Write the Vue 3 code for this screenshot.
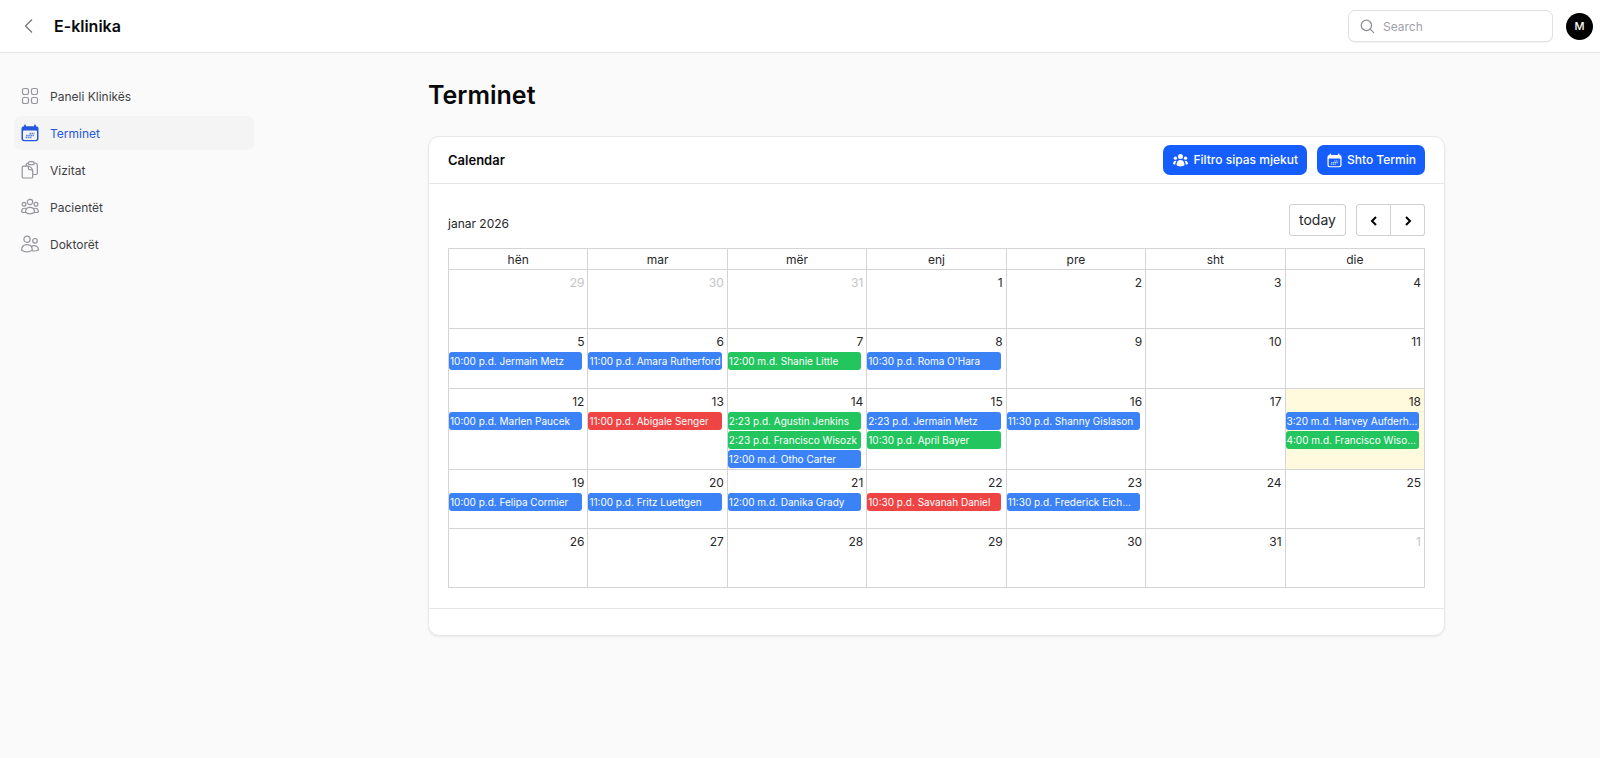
<script setup>
import { ref } from 'vue'

const search = ref('')

const nav = [
  { label: 'Paneli Klinikës', icon: 'grid' },
  { label: 'Terminet', icon: 'calendar', active: true },
  { label: 'Vizitat', icon: 'clipboard' },
  { label: 'Pacientët', icon: 'group' },
  { label: 'Doktorët', icon: 'users' },
]

const weekdays = ['hën', 'mar', 'mër', 'enj', 'pre', 'sht', 'die']

const events = {
  5: [['10:00 p.d. Jermain Metz', 'blue']],
  6: [['11:00 p.d. Amara Rutherford', 'blue']],
  7: [['12:00 m.d. Shanie Little', 'green']],
  8: [["10:30 p.d. Roma O'Hara", 'blue']],
  12: [['10:00 p.d. Marlen Paucek', 'blue']],
  13: [['11:00 p.d. Abigale Senger', 'red']],
  14: [
    ['2:23 p.d. Agustin Jenkins', 'green'],
    ['2:23 p.d. Francisco Wisozk', 'green'],
    ['12:00 m.d. Otho Carter', 'blue'],
  ],
  15: [
    ['2:23 p.d. Jermain Metz', 'blue'],
    ['10:30 p.d. April Bayer', 'green'],
  ],
  16: [['11:30 p.d. Shanny Gislason', 'blue']],
  18: [
    ['3:20 m.d. Harvey Aufderh…', 'blue'],
    ['4:00 m.d. Francisco Wiso…', 'green'],
  ],
  19: [['10:00 p.d. Felipa Cormier', 'blue']],
  20: [['11:00 p.d. Fritz Luettgen', 'blue']],
  21: [['12:00 m.d. Danika Grady', 'blue']],
  22: [['10:30 p.d. Savanah Daniel', 'red']],
  23: [['11:30 p.d. Frederick Eich…', 'blue']],
}

const weeks = Array.from({ length: 5 }, (_, w) =>
  Array.from({ length: 7 }, (_, d) => {
    const n = w * 7 + d - 2
    const other = n < 1 || n > 31
    return {
      key: n,
      label: n < 1 ? n + 31 : n > 31 ? n - 31 : n,
      other,
      today: n === 18,
      events: other ? [] : events[n] || [],
    }
  })
)
</script>

<template>
  <div class="page">
    <header class="topbar">
      <button class="back" type="button" aria-label="Back">
        <svg viewBox="0 0 16 16"><path d="M11 1.500 4.500 8l6.500 6.500" /></svg>
      </button>
      <a class="brand" href="#">E-klinika</a>
      <label class="search">
        <svg viewBox="0 0 16 16"><circle cx="6.800" cy="6.800" r="5.500" /><path d="m10.800 10.800 4 4" /></svg>
        <input v-model="search" type="search" placeholder="Search" aria-label="Search" />
      </label>
      <button class="avatar" type="button" aria-label="Account">M</button>
    </header>

    <div class="body">
      <nav class="sidebar">
        <a v-for="item in nav" :key="item.label" href="#" class="nav-item" :class="{ active: item.active }">
          <svg v-if="item.icon === 'grid'" class="icon" viewBox="0 0 18 18">
            <rect x="1.500" y="1.500" width="6" height="6" rx="1.700" />
            <rect x="10.500" y="1.500" width="6" height="6" rx="1.700" />
            <rect x="1.500" y="10.500" width="6" height="6" rx="1.700" />
            <rect x="10.500" y="10.500" width="6" height="6" rx="1.700" />
          </svg>
          <svg v-else-if="item.icon === 'calendar'" class="icon solid" viewBox="0 0 18 18">
            <path fill-rule="evenodd" d="M4 .6c.5 0 .9.400.9.900v.8h8.200v-.8a.9.9 0 0 1 1.800 0v.8A2.700 2.700 0 0 1 17.500 5v9.500a2.700 2.700 0 0 1-2.700 2.700H3.200a2.700 2.700 0 0 1-2.700-2.700V5a2.700 2.700 0 0 1 2.600-2.700v-.8c0-.5.4-.9.9-.9ZM2 7.500v7c0 .8.600 1.400 1.400 1.400h11.200c.8 0 1.400-.6 1.400-1.400v-7c0-.6-.5-1-1-1H3c-.5 0-1 .4-1 1Z" />
            <path class="detail" d="M8.500 9.500h5M5 11.500h8M4.500 13.500h6" />
          </svg>
          <svg v-else-if="item.icon === 'clipboard'" class="icon" viewBox="0 0 18 18">
            <path d="M7.300 2.300C7.300 1.300 8 .7 9 .7h2.500c1 0 1.700.6 1.700 1.600 0 .9-.4 1.400-1.200 1.400H8.400c-.7 0-1.100-.5-1.100-1.400ZM7.300 2C5.900 2.100 5.200 2.700 5.200 4v1.200M13.200 2c2.100.1 3.100.8 3.100 2.300v8c0 .8-.4 1.200-1.200 1.200h-3.400" />
            <path d="M2.500 5.200h3.700c3.200 0 5.500 2.300 5.500 5.300v5.200c0 .8-.5 1.300-1.300 1.300H2.500c-.8 0-1.300-.5-1.300-1.300V6.500c0-.8.5-1.300 1.300-1.300Z" />
            <path d="M6.200 5.200c1 0 1.300.8 1.300 1.600v.8c0 .7.400 1.100 1.100 1.100h1c1.200 0 2.100.7 2.100 1.800" />
          </svg>
          <svg v-else-if="item.icon === 'group'" class="icon" viewBox="0 0 18 18">
            <circle cx="9" cy="4" r="2.700" />
            <circle cx="3" cy="6.200" r="1.900" />
            <circle cx="15" cy="6.200" r="1.900" />
            <path d="M9 9.300c2.700 0 4.500 1.800 4.500 5-2.500 2-6.500 2-9 0 0-3.200 1.800-5 4.500-5Z" />
            <path d="M5 10.500c-2.600-.8-4.400.6-4.400 3.200 1.300.8 2.500 1 3.900.6M13 10.500c2.600-.8 4.400.6 4.400 3.200-1.300.8-2.500 1-3.900.6" />
          </svg>
          <svg v-else class="icon" viewBox="0 0 18 18">
            <circle cx="6" cy="4.200" r="3.100" />
            <circle cx="14" cy="5.800" r="2.300" />
            <path d="M.6 15.300C.6 11.800 2.700 9.700 6 9.700s5.300 2.100 5.300 5.600c-3.200 2-7.500 2-10.700 0Z" />
            <path d="M10.300 11.700c3-2.400 7.200-.5 7.200 3.300-1.900.9-4 1.200-6.200.8" />
          </svg>
          <span>{{ item.label }}</span>
        </a>
      </nav>

      <main class="main">
        <div class="content">
          <h1>Terminet</h1>
          <section class="card">
            <div class="card-head">
              <h2>Calendar</h2>
              <div class="actions">
                <button class="primary" type="button">
                  <svg viewBox="0 0 18 18">
                    <circle cx="9" cy="4.300" r="3" />
                    <circle cx="2.900" cy="6.200" r="2" />
                    <circle cx="15.100" cy="6.200" r="2" />
                    <path d="M9 8.500c2.900 0 4.800 2.300 4.800 5.900-2.600 2.300-7 2.300-9.600 0C4.200 10.800 6.100 8.500 9 8.500ZM4 9.500c-.9 1.400-1.300 2.900-1.200 4.400-1 0-1.900-.2-2.700-.7C.1 10.600 1.700 9.100 4 9.500ZM14 9.500c.9 1.400 1.300 2.900 1.200 4.400 1 0 1.900-.2 2.700-.7 0-2.600-1.600-4.100-3.900-3.700Z" />
                  </svg>
                  Filtro sipas mjekut
                </button>
                <button class="primary" type="button">
                  <svg viewBox="0 0 18 18">
                    <path fill-rule="evenodd" d="M4 .6c.5 0 .9.400.9.900v.8h8.200v-.8a.9.9 0 0 1 1.800 0v.8A2.700 2.700 0 0 1 17.500 5v9.500a2.700 2.700 0 0 1-2.700 2.700H3.200a2.700 2.700 0 0 1-2.700-2.700V5a2.700 2.700 0 0 1 2.600-2.700v-.8c0-.5.4-.9.9-.9ZM2 7.500v7c0 .8.600 1.400 1.400 1.400h11.200c.8 0 1.400-.6 1.400-1.400v-7c0-.6-.5-1-1-1H3c-.5 0-1 .4-1 1Z" />
                    <path class="detail" d="M8.500 9.500h5M5 11.500h8M4.500 13.500h6" />
                  </svg>
                  Shto Termin
                </button>
              </div>
            </div>

            <div class="card-body">
              <div class="toolbar">
                <span class="month">janar 2026</span>
                <div class="controls">
                  <button class="ctl today-btn" type="button">today</button>
                  <div class="pair">
                    <button class="ctl" type="button" aria-label="Previous month">
                      <svg viewBox="0 0 12 12"><path d="M8 2 4 6l4 4" /></svg>
                    </button>
                    <button class="ctl" type="button" aria-label="Next month">
                      <svg viewBox="0 0 12 12"><path d="m4 2 4 4-4 4" /></svg>
                    </button>
                  </div>
                </div>
              </div>

              <table class="calendar">
                <thead>
                  <tr>
                    <th v-for="d in weekdays" :key="d" scope="col">{{ d }}</th>
                  </tr>
                </thead>
                <tbody>
                  <tr v-for="(week, i) in weeks" :key="i">
                    <td v-for="day in week" :key="day.key" :class="{ other: day.other, today: day.today }">
                      <div class="num">{{ day.label }}</div>
                      <a v-for="e in day.events" :key="e[0]" href="#" class="event" :class="e[1]">{{ e[0] }}</a>
                    </td>
                  </tr>
                </tbody>
              </table>
            </div>
            <div class="card-foot"></div>
          </section>
        </div>
      </main>
    </div>
  </div>
</template>

<style>
body {
  background: #fafafa;
}
</style>

<style scoped>
.page,
.page * {
  box-sizing: border-box;
}
.page {
  min-height: 100vh;
  background: #fafafa;
  color: #27272a;
  font-family: Inter, "Liberation Sans", sans-serif;
  font-size: 12px;
  line-height: 20px;
}
button,
input {
  font: inherit;
  color: inherit;
}
button {
  padding: 0;
  border: 0;
  cursor: pointer;
}
a {
  color: inherit;
  text-decoration: none;
}
h1,
h2 {
  margin: 0;
  color: #09090b;
  font-weight: 600;
}
svg {
  fill: none;
  flex: none;
}

.topbar {
  display: flex;
  align-items: center;
  height: 53px;
  padding: 0 7px 0 21px;
  background: #fff;
  border-bottom: 1px solid #e4e4e7;
}
.back {
  display: flex;
  background: none;
}
.back svg {
  width: 16px;
  height: 16px;
  stroke: #71717a;
  stroke-width: 1.200;
}
.brand {
  margin-left: 17px;
  color: #09090b;
  font-size: 16px;
  font-weight: 600;
}
.search {
  display: flex;
  align-items: center;
  gap: 8px;
  width: 205px;
  height: 32px;
  margin-left: auto;
  padding: 0 11px;
  background: #fff;
  border: 1px solid #e0e0e3;
  border-radius: 7px;
  box-shadow: 0 1px 1px #0000000d;
}
.search svg {
  width: 15px;
  height: 15px;
  stroke: #8e8e96;
  stroke-width: 1.300;
}
.search input {
  flex: 1;
  min-width: 0;
  padding: 2px 0 0;
  background: none;
  border: 0;
  outline: 0;
}
.search input::placeholder {
  color: #a1a1aa;
  opacity: 1;
}
.avatar {
  width: 27px;
  height: 27px;
  margin-left: 13px;
  border-radius: 50%;
  background: #000;
  color: #fff;
  font-size: 11px;
  font-weight: 500;
}

.body {
  display: flex;
}
.sidebar {
  display: flex;
  flex-direction: column;
  gap: 3px;
  flex: none;
  width: 273px;
  padding: 26px 19px 0 14px;
}
.nav-item {
  display: flex;
  align-items: center;
  gap: 11px;
  height: 34px;
  padding: 0 7px;
  border-radius: 7px;
  color: #3f3f46;
}
.nav-item span {
  padding-top: 2px;
}
.nav-item.active {
  background: #f4f4f5;
  color: #2457db;
}
.icon {
  width: 18px;
  height: 18px;
  stroke: #94949c;
  stroke-width: 1.200;
}
.icon.solid {
  fill: #2457db;
  stroke: none;
}
.detail {
  fill: none;
  stroke: #2457db;
  stroke-width: 1.300;
  stroke-dasharray: 1.700 0.500;
  opacity: 0.7;
}
.primary .detail {
  stroke: #fff;
}

.main {
  flex: 1;
  min-width: 0;
  padding: 28px 24px;
}
.content {
  max-width: 1017px;
  margin: 0 auto;
}
h1 {
  font-size: 25px;
  line-height: 28px;
}
.card {
  margin-top: 27px;
  background: #fff;
  border: 1px solid #e8e8ea;
  border-radius: 11px;
  box-shadow: 0 1px 2px #00000014;
}
.card-head {
  display: flex;
  align-items: center;
  justify-content: space-between;
  padding: 8px 19px;
  border-bottom: 1px solid #e4e4e7;
}
h2 {
  font-size: 13px;
  line-height: 20px;
}
.actions {
  display: flex;
  gap: 10px;
}
.primary {
  display: flex;
  align-items: center;
  gap: 5px;
  height: 30px;
  padding: 0 9px 0 10px;
  border-radius: 7px;
  background: #155dfc;
  color: #fff;
  font-weight: 500;
}
.primary svg {
  width: 15px;
  height: 15px;
  fill: #fff;
}
.card-body {
  padding: 20px 19px;
}
.toolbar {
  display: flex;
  align-items: center;
  justify-content: space-between;
  margin-bottom: 12px;
}
.month {
  padding-top: 8px;
}
.controls {
  display: flex;
  gap: 10px;
}
.ctl {
  display: flex;
  align-items: center;
  justify-content: center;
  width: 35px;
  height: 32px;
  background: #fff;
  border: 1px solid #d0d0d4;
  border-radius: 3px;
}
.today-btn {
  width: 57px;
  font-size: 14px;
}
.ctl svg {
  width: 12px;
  height: 12px;
  margin-top: 2px;
  stroke: #000;
  stroke-width: 2;
}
.pair {
  display: flex;
}
.pair .ctl:first-child {
  border-radius: 3px 0 0 3px;
}
.pair .ctl:last-child {
  width: 34px;
  border-left: 0;
  border-radius: 0 3px 3px 0;
}

.calendar {
  width: 100%;
  table-layout: fixed;
  border-spacing: 0;
  border-top: 1px solid #d4d4d8;
  border-left: 1px solid #d4d4d8;
}
th,
td {
  padding: 0;
  border-right: 1px solid #d4d4d8;
  border-bottom: 1px solid #d4d4d8;
}
th {
  height: 21px;
  padding-top: 2px;
  font-weight: 400;
  line-height: 18px;
}
td {
  height: 59px;
  vertical-align: top;
}
tr:nth-child(2) td {
  height: 60px;
}
.today {
  background: #fff9dd;
}
.num {
  height: 23px;
  padding: 3px 3px 0;
  text-align: right;
}
.other .num {
  color: #c4c4c8;
}
.event {
  display: block;
  height: 18px;
  margin: 0 5px 1px 0;
  padding: 0 1px;
  overflow: hidden;
  border-radius: 3px;
  color: #fff;
  font-size: 10px;
  font-weight: 400;
  line-height: 18px;
  white-space: nowrap;
}
.blue {
  background: #3b82f6;
}
.green {
  background: #22c55e;
}
.red {
  background: #ef4444;
}
.card-foot {
  height: 27px;
  border-top: 1px solid #e4e4e7;
}
</style>
